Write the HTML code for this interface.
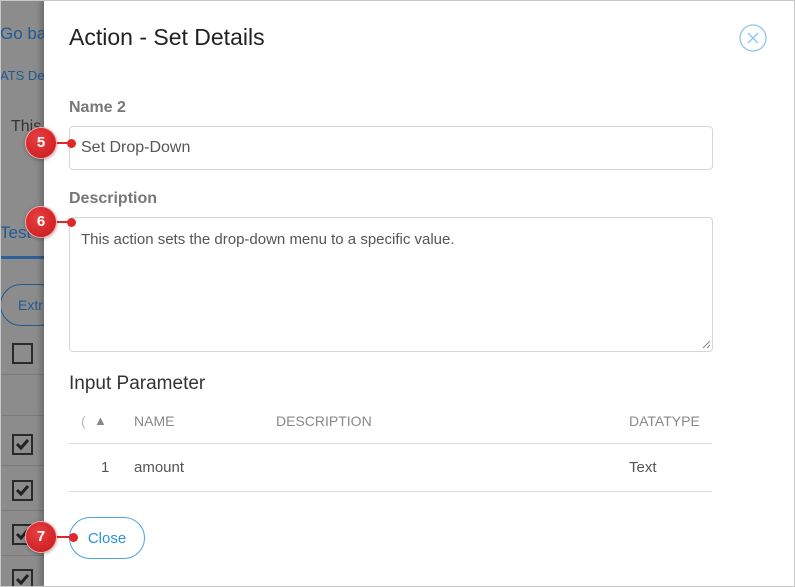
<!DOCTYPE html>
<html><head><meta charset="utf-8"><style>
*{box-sizing:border-box;margin:0;padding:0}
body{width:795px;height:587px;overflow:hidden;font-family:"Liberation Sans",Arial,sans-serif;position:relative;background:#fff}
.frame{position:absolute;inset:0;border:1px solid #c8c8c8;z-index:20;pointer-events:none}
.bg{position:absolute;left:0;top:0;width:44px;height:587px;background:#8c8c8c;overflow:hidden}
.bg div,.bg svg{position:absolute;white-space:nowrap}
.modal{position:absolute;left:44px;top:0;width:751px;height:587px;background:#fff;box-shadow:-3px 0 6px rgba(0,0,0,.25)}
.a{position:absolute}
.lbl{font-size:16px;font-weight:bold;color:#777}
.inp{border:1px solid #d6d6d6;border-radius:4px;font-size:16px;color:#555}
.th{font-size:14px;color:#888;top:413px}
.cb{position:absolute;left:12px;width:21px;height:21px;border:2px solid #2a2a2a;background:#8c8c8c}
.mk{position:absolute;width:30px;height:30px;border-radius:50%;background:radial-gradient(circle at 40% 35%,#e84040,#c8151a);color:#fff;font-size:15px;font-weight:bold;text-align:center;line-height:30px;box-shadow:0 0 0 1px #f4b0b0,0 1px 4px rgba(0,0,0,.5);z-index:10}
.ln{position:absolute;height:2px;background:#e0282a;z-index:9}
.dot{position:absolute;width:9px;height:9px;border-radius:50%;background:#e0282a;z-index:10}
</style></head><body>
<div class="bg">
<div style="top:24px;left:0;font-size:17px;color:#1f5a96">Go ba</div>
<div style="top:68px;left:0;font-size:13px;color:#1f5a96">ATS De</div>
<div style="top:118px;left:11px;font-size:16px;color:#333">This</div>
<div style="top:223px;left:0;font-size:17px;color:#1f5a96">Test C</div>
<div style="top:256px;left:0;width:44px;height:3px;background:#2f5f98"></div>
<div style="top:284px;left:0;width:60px;height:42px;border:1px solid #1f5a96;border-radius:21px"></div>
<div style="top:297px;left:18px;font-size:14px;color:#1f5a96">Extr</div>
<div class="cb" style="top:343px"></div>
<div style="top:374px;left:0;width:44px;height:1px;background:#7a7a7a"></div>
<div style="top:415px;left:0;width:44px;height:1px;background:#7a7a7a"></div>
<div class="cb" style="top:434px"></div>
<div style="top:465px;left:0;width:44px;height:1px;background:#7a7a7a"></div>
<div class="cb" style="top:480px"></div>
<div style="top:510px;left:0;width:44px;height:1px;background:#7a7a7a"></div>
<div class="cb" style="top:524px"></div>
<div style="top:555px;left:0;width:44px;height:1px;background:#7a7a7a"></div>
<div class="cb" style="top:569px"></div>
<svg style="left:14px;top:436px" width="17" height="17"><path d="M3 8l4 4 7-8" fill="none" stroke="#222" stroke-width="3"/></svg>
<svg style="left:14px;top:482px" width="17" height="17"><path d="M3 8l4 4 7-8" fill="none" stroke="#222" stroke-width="3"/></svg>
<svg style="left:14px;top:526px" width="17" height="17"><path d="M3 8l4 4 7-8" fill="none" stroke="#222" stroke-width="3"/></svg>
<svg style="left:14px;top:571px" width="17" height="17"><path d="M3 8l4 4 7-8" fill="none" stroke="#222" stroke-width="3"/></svg>
</div>
<div class="modal">
<div class="a" style="left:25px;top:24px;font-size:23px;color:#222">Action - Set Details</div>
<svg class="a" style="left:695px;top:24px" width="28" height="28" viewBox="0 0 28 28"><circle cx="14" cy="14" r="13" fill="none" stroke="#8cc4f0" stroke-width="1.3"/><path d="M9 9L19 19M19 9L9 19" stroke="#8cc4f0" stroke-width="1.3"/></svg>
<div class="a lbl" style="left:25px;top:99px">Name 2</div>
<div class="a inp" style="left:25px;top:126px;width:644px;height:44px;padding:12px 11px">Set Drop-Down</div>
<div class="a lbl" style="left:25px;top:190px">Description</div>
<div class="a inp" style="left:25px;top:217px;width:644px;height:135px;padding:13px 11px;font-size:15px">This action sets the drop-down menu to a specific value.</div>
<svg class="a" style="left:658px;top:340px" width="9" height="9"><path d="M8 1L1 8M8 5L5 8" stroke="#888"/></svg>
<div class="a" style="left:25px;top:373px;font-size:19px;color:#333">Input Parameter</div>
<div class="a th" style="left:37px;color:#bbb">(</div>
<div class="a th" style="left:50px;color:#888;font-size:13px">▲</div>
<div class="a th" style="left:90px">NAME</div>
<div class="a th" style="left:232px">DESCRIPTION</div>
<div class="a th" style="left:585px">DATATYPE</div>
<div class="a" style="left:25px;top:443px;width:643px;height:1px;background:#ddd"></div>
<div class="a" style="left:57px;top:459px;font-size:15px;color:#555">1</div>
<div class="a" style="left:90px;top:459px;font-size:15px;color:#555">amount</div>
<div class="a" style="left:585px;top:459px;font-size:15px;color:#555">Text</div>
<div class="a" style="left:25px;top:491px;width:643px;height:1px;background:#ddd"></div>
<div class="a" style="left:25px;top:517px;width:76px;height:42px;border:1px solid #4aa3df;border-radius:21px;color:#2a93d8;font-size:15px;text-align:center;line-height:42px">Close</div>
</div>
<div class="mk" style="left:26px;top:128px">5</div><div class="ln" style="left:52px;top:142px;width:18px"></div><div class="dot" style="left:67px;top:139px"></div>
<div class="mk" style="left:26px;top:207px">6</div><div class="ln" style="left:52px;top:221px;width:18px"></div><div class="dot" style="left:67px;top:218px"></div>
<div class="mk" style="left:26px;top:522px">7</div><div class="ln" style="left:52px;top:536px;width:20px"></div><div class="dot" style="left:69px;top:533px"></div>
<div class="frame"></div>
</body></html>
